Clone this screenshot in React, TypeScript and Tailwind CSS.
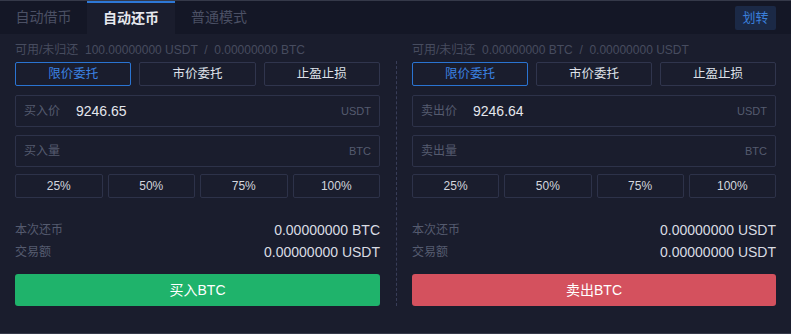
import React from 'react'

const FONT = "font-['Liberation_Sans','Noto_Sans_CJK_SC',sans-serif]"

interface SideProps {
    info: string
    priceLabel: string
    price: string
    amountLabel: string
    repay: string
    volume: string
    action: string
    buy: boolean
}

const ORDER_TYPES = ['限价委托', '市价委托', '止盈止损']
const PERCENTS = ['25%', '50%', '75%', '100%']

const TradeSide: React.FC<SideProps> = ({ info, priceLabel, price, amountLabel, repay, volume, action, buy }) => {
    return (
        <div className="flex flex-col">
            <div className="mt-[8px] h-[16px] text-[12px] leading-[16px] text-[#474c5f] whitespace-pre">
                {info}
            </div>

            <div className="mt-[4px] grid grid-cols-3 gap-[8px]">
                {ORDER_TYPES.map((t, i) => (
                    <div
                        key={t}
                        className={
                            i === 0
                                ? 'h-[24px] flex items-center justify-center rounded-[2px] border border-[#2a74d2] text-[12.5px] text-[#3a82e2]'
                                : 'h-[24px] flex items-center justify-center rounded-[2px] border border-[#30354d] text-[12.5px] text-[#dfe2ea]'
                        }
                    >
                        {t}
                    </div>
                ))}
            </div>

            <div className="mt-[9px] h-[32px] flex items-center rounded-[2px] border border-[#2d3249] px-[8px]">
                <span className="text-[12px] text-[#555b6f] w-[52px]">{priceLabel}</span>
                <span className="text-[14px] font-medium text-[#e4e6ec]">{price}</span>
                <span className="ml-auto text-[11px] text-[#555b6f]">USDT</span>
            </div>

            <div className="mt-[8px] h-[32px] flex items-center rounded-[2px] border border-[#2d3249] px-[8px]">
                <span className="text-[12px] text-[#555b6f]">{amountLabel}</span>
                <span className="ml-auto text-[11px] text-[#555b6f]">BTC</span>
            </div>

            <div className="mt-[7px] grid grid-cols-4 gap-[5px]">
                {PERCENTS.map((p) => (
                    <div
                        key={p}
                        className="h-[24px] flex items-center justify-center rounded-[2px] border border-[#2d3249] text-[12px] text-[#d3d6de]"
                    >
                        {p}
                    </div>
                ))}
            </div>

            <div className="mt-[21px] flex flex-col">
                <div className="h-[22px] flex items-center justify-between">
                    <span className="text-[12px] text-[#555b6f]">本次还币</span>
                    <span className="text-[14px] text-[#d9dce3]">{repay}</span>
                </div>
                <div className="h-[22px] flex items-center justify-between">
                    <span className="text-[12px] text-[#555b6f]">交易额</span>
                    <span className="text-[14px] text-[#d9dce3]">{volume}</span>
                </div>
            </div>

            <button
                className={
                    buy
                        ? 'mt-[11px] h-[32px] rounded-[3px] bg-[#1fb36b] text-[14px] text-white'
                        : 'mt-[11px] h-[32px] rounded-[3px] bg-[#d4515e] text-[14px] text-white'
                }
            >
                {action}
            </button>
        </div>
    )
}

export default function App() {
    return (
        <div className={`${FONT} w-[791px] h-[334px] bg-[#1a1d2d] border-y border-[#353949] flex flex-col`}>
            {/* Tabs */}
            <div className="h-[33px] bg-[#141726] flex items-stretch">
                <div className="w-[87px] flex items-center justify-center text-[14px] text-[#4b5064]">自动借币</div>
                <div className="w-[88px] flex items-center justify-center text-[14px] font-bold text-[#e6e8ee] bg-[#1a1d2d] border-t-2 border-[#2d78d6]">
                    自动还币
                </div>
                <div className="w-[88px] flex items-center justify-center text-[14px] text-[#4b5064]">普通模式</div>
                <div className="ml-auto mr-[15px] flex items-center">
                    <div className="h-[24px] w-[41px] flex items-center justify-center rounded-[2px] bg-[#1b2946] text-[13px] text-[#3a7fda]">
                        划转
                    </div>
                </div>
            </div>

            {/* Body */}
            <div className="flex px-[15px]">
                <div className="w-[365px]">
                    <TradeSide
                        info="可用/未归还  100.00000000 USDT  /  0.00000000 BTC"
                        priceLabel="买入价"
                        price="9246.65"
                        amountLabel="买入量"
                        repay="0.00000000 BTC"
                        volume="0.00000000 USDT"
                        action="买入BTC"
                        buy
                    />
                </div>
                <div className="ml-[16px] mr-[15px] mt-[27px] w-0 border-l border-dashed border-[#383d58]" />
                <div className="w-[364px]">
                    <TradeSide
                        info="可用/未归还  0.00000000 BTC  /  0.00000000 USDT"
                        priceLabel="卖出价"
                        price="9246.64"
                        amountLabel="卖出量"
                        repay="0.00000000 USDT"
                        volume="0.00000000 USDT"
                        action="卖出BTC"
                        buy={false}
                    />
                </div>
            </div>
        </div>
    )
}
